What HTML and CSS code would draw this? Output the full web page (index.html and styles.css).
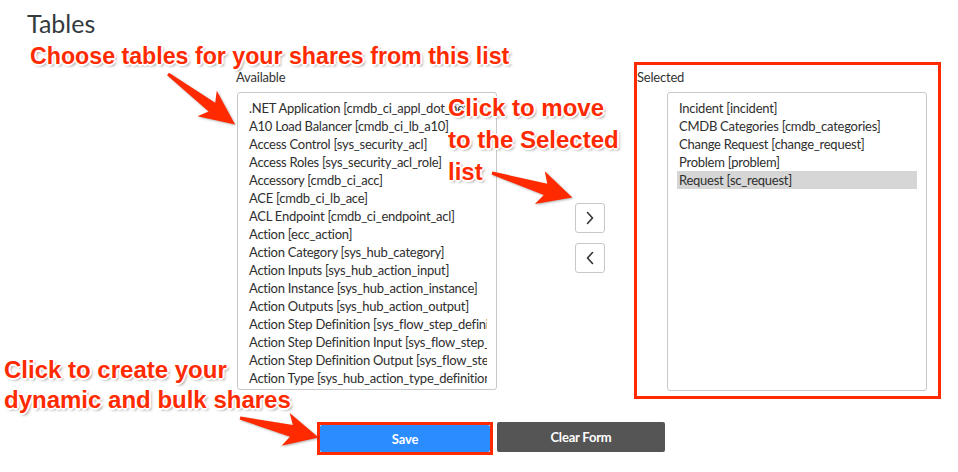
FILE: index.html
```html
<!DOCTYPE html>
<html lang="en">
<head>
<meta charset="utf-8">
<title>Tables</title>
<link rel="stylesheet" href="styles.css">
</head>
<body>
<div class="page">
  <h1 class="title">Tables</h1>
  <div class="slush">
    <div class="col avail">
      <div class="label">Available</div>
      <div class="list">
        <div class="opt">.NET Application [cmdb_ci_appl_dot_net]</div>
        <div class="opt">A10 Load Balancer [cmdb_ci_lb_a10]</div>
        <div class="opt">Access Control [sys_security_acl]</div>
        <div class="opt">Access Roles [sys_security_acl_role]</div>
        <div class="opt">Accessory [cmdb_ci_acc]</div>
        <div class="opt">ACE [cmdb_ci_lb_ace]</div>
        <div class="opt">ACL Endpoint [cmdb_ci_endpoint_acl]</div>
        <div class="opt">Action [ecc_action]</div>
        <div class="opt">Action Category [sys_hub_category]</div>
        <div class="opt">Action Inputs [sys_hub_action_input]</div>
        <div class="opt">Action Instance [sys_hub_action_instance]</div>
        <div class="opt">Action Outputs [sys_hub_action_output]</div>
        <div class="opt">Action Step Definition [sys_flow_step_definition]</div>
        <div class="opt">Action Step Definition Input [sys_flow_step_definition_input]</div>
        <div class="opt">Action Step Definition Output [sys_flow_step_definition_output]</div>
        <div class="opt">Action Type [sys_hub_action_type_definition]</div>
        <div class="opt">Action Type Base [sys_hub_action_type_base]</div>
      </div>
    </div>
    <div class="movers">
      <button class="mover" type="button" aria-label="Add">
        <svg width="10" height="14" viewBox="0 0 10 14"><path d="M2.5 1.5 L7.5 7 L2.5 12.5" fill="none" stroke="#333" stroke-width="1.6" stroke-linecap="round" stroke-linejoin="round"/></svg>
      </button>
      <button class="mover" type="button" aria-label="Remove">
        <svg width="10" height="14" viewBox="0 0 10 14"><path d="M7.5 1.5 L2.5 7 L7.5 12.5" fill="none" stroke="#333" stroke-width="1.6" stroke-linecap="round" stroke-linejoin="round"/></svg>
      </button>
    </div>
    <div class="col selected">
      <div class="label">Selected</div>
      <div class="list">
        <div class="opt">Incident [incident]</div>
        <div class="opt">CMDB Categories [cmdb_categories]</div>
        <div class="opt">Change Request [change_request]</div>
        <div class="opt">Problem [problem]</div>
        <div class="opt active">Request [sc_request]</div>
      </div>
    </div>
  </div>
  <div class="actions">
    <div class="save-ring"><button class="btn save" type="button">Save</button></div>
    <button class="btn clear" type="button">Clear Form</button>
  </div>
</div>

<div class="note note-choose">Choose tables for your shares from this list</div>
<div class="note note-move">Click to move<br>to the Selected<br>list</div>
<div class="note note-save">Click to create your<br>dynamic and bulk shares</div>

<svg class="arrows" width="958" height="472" viewBox="0 0 958 472">
  <g fill="#ff2a00">
    <g transform="translate(168 74) rotate(37)">
      <polygon points="0,-1.5 55,-5.5 49,-16 84,0 49,16 55,5.5 0,1.5"/>
    </g>
    <g transform="translate(492 173) rotate(17)">
      <polygon points="0,-1.5 56,-6 50,-17 84,0 50,17 56,6 0,1.5"/>
    </g>
    <g transform="translate(240 418) rotate(14)">
      <polygon points="0,-1.5 53,-6 47,-17 81,0 47,17 53,6 0,1.5"/>
    </g>
  </g>
</svg>
</body>
</html>
```

FILE: styles.css
```css
* { box-sizing: border-box; }

html, body {
  margin: 0;
  padding: 0;
  background: #ffffff;
}

body {
  position: relative;
  width: 958px;
  height: 472px;
  overflow: hidden;
  font-family: Lato, "Noto Sans", sans-serif;
  color: #333333;
}

.page {
  padding-top: 8px;
}

.title {
  margin: 0 0 24px 27px;
  font-family: Lato, sans-serif;
  font-weight: 400;
  font-size: 25px;
  line-height: 30px;
  color: #333a40;
}

.slush {
  display: flex;
  align-items: flex-start;
  margin-left: 236px;
}

.col {
  display: flex;
  flex-direction: column;
}

.avail {
  width: 261px;
  padding-top: 6px;
}

.label {
  font-size: 13px;
  line-height: 18px;
  letter-spacing: -0.2px;
  color: #333333;
  margin-bottom: 6px;
}

.list {
  width: 260px;
  height: 298px;
  border: 1px solid #c8c8c8;
  border-radius: 3px;
  padding: 6px 9px;
  overflow: hidden;
  background: #fff;
}

.avail .list {
  margin-left: 1px;
}

.opt {
  font-size: 13px;
  line-height: 18px;
  letter-spacing: -0.25px;
  padding-left: 2px;
  white-space: nowrap;
  overflow: hidden;
  color: #2e2e2e;
}

.opt.active {
  background: #d6d6d6;
}

.movers {
  display: flex;
  flex-direction: column;
  gap: 10px;
  margin-left: 78px;
  margin-right: 29px;
  padding-top: 141px;
}

.mover {
  width: 30px;
  height: 30px;
  padding: 0;
  border: 1px solid #c8c8c8;
  border-radius: 3px;
  background: #ffffff;
  display: flex;
  align-items: center;
  justify-content: center;
}

.selected {
  width: 307px;
  border: 3px solid #ff2a00;
  padding: 3px 11px 5px 0;
}

.selected .list {
  margin-left: 30px;
  height: 299px;
}

.actions {
  display: flex;
  align-items: flex-start;
  margin-top: 23px;
  margin-left: 317px;
}

.save-ring {
  border: 3px solid #ff2a00;
  padding: 0;
}

.btn {
  border: none;
  border-radius: 2px;
  color: #ffffff;
  font-family: Lato, sans-serif;
  font-weight: 700;
  font-size: 13px;
  letter-spacing: -0.2px;
  padding: 0;
}

.save {
  display: block;
  width: 170px;
  height: 27px;
  background: #2b8cff;
}

.clear {
  width: 168px;
  height: 30px;
  margin-left: 4px;
  background: #555555;
}

.note {
  position: absolute;
  font-family: "Liberation Sans", Arial, sans-serif;
  font-weight: 700;
  font-size: 23px;
  line-height: 30px;
  color: #ff2a00;
  white-space: nowrap;
  text-shadow:
    1px 0 0 #fff, -1px 0 0 #fff, 0 1px 0 #fff, 0 -1px 0 #fff,
    1px 1px 0 #fff, -1px -1px 0 #fff, 1px -1px 0 #fff, -1px 1px 0 #fff,
    2px 0 0 #fff, -2px 0 0 #fff, 0 2px 0 #fff, 0 -2px 0 #fff,
    2px 2px 3px rgba(0, 0, 0, 0.45);
}

.note-choose {
  left: 30px;
  top: 41px;
  font-size: 23.2px;
}

.note-move {
  left: 448px;
  top: 92px;
  font-size: 24px;
  line-height: 32px;
}

.note-save {
  left: 4px;
  top: 355px;
  font-size: 24px;
}

.arrows {
  position: absolute;
  left: 0;
  top: 0;
  pointer-events: none;
  filter: drop-shadow(1px 1px 1px rgba(0, 0, 0, 0.3));
}
```
